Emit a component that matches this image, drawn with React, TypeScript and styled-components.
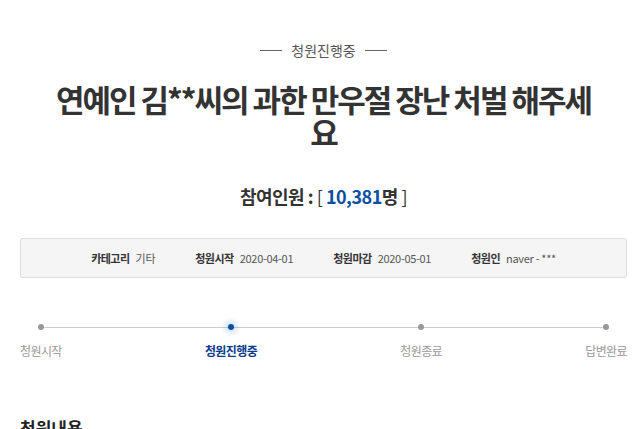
import styled, { createGlobalStyle } from "styled-components";

const GlobalStyle = createGlobalStyle`
    body {
        margin: 0;
        background: #fff;
        font-family: "Noto Sans CJK KR", "Noto Sans", sans-serif;
        color: #333;
    }
`

const infoItems = [
    { label: "카테고리", value: "기타" },
    { label: "청원시작", value: "2020-04-01" },
    { label: "청원마감", value: "2020-05-01" },
    { label: "청원인", value: "naver - ***" },
];

const steps = [
    { name: "청원시작", active: false },
    { name: "청원진행중", active: true },
    { name: "청원종료", active: false },
    { name: "답변완료", active: false },
];

export default function App(){
    return <>
        <GlobalStyle/>
        <Page>
            <Status>청원진행중</Status>
            <Title>연예인 김**씨의 과한 만우절 장난 처벌 해주세요</Title>
            <Count>
                참여인원 : <Bracket>[</Bracket> <Number>10,381</Number>명 <Bracket>]</Bracket>
            </Count>
            <InfoBox>
                {
                    infoItems.map((item, key) => <InfoItem key={key}>
                        <InfoLabel>{item.label}</InfoLabel>
                        <InfoValue>{item.value}</InfoValue>
                    </InfoItem>)
                }
            </InfoBox>
            <Steps>
                {
                    steps.map((step, key) => <Step key={key}>
                        <Dot active={step.active}/>
                        <StepName active={step.active}>{step.name}</StepName>
                    </Step>)
                }
            </Steps>
            <SectionTitle>청원내용</SectionTitle>
        </Page>
    </>
}

const Page = styled.div`
    padding: 40px 13px 0 20px;
    height: 429px;
    box-sizing: border-box;
    overflow: hidden;
`
const Status = styled.div`
    display: flex;
    justify-content: center;
    align-items: center;
    font-size: 14px;
    line-height: 20px;
    color: #555;
    &::before, &::after {
        content: "";
        width: 22px;
        height: 1px;
        background: #666;
        margin: 0 9px;
    }
`
const Title = styled.h1`
    margin: 22px auto 0;
    width: 550px;
    text-align: center;
    font-size: 31px;
    line-height: 33px;
    font-weight: bold;
    letter-spacing: -2px;
    color: #333;
`
const Count = styled.div`
    margin-top: 36px;
    text-align: center;
    font-size: 18px;
    line-height: 24px;
    font-weight: bold;
    letter-spacing: -0.5px;
    color: #333;
`
const Bracket = styled.span`
    font-weight: normal;
`
const Number = styled.span`
    color: #0b4ea2;
`
const InfoBox = styled.div`
    margin-top: 30px;
    height: 40px;
    box-sizing: border-box;
    display: flex;
    justify-content: center;
    align-items: center;
    gap: 40px;
    background: #f5f5f5;
    border: 1px solid #dcdcdc;
    border-radius: 3px;
    font-size: 11px;
`
const InfoItem = styled.div`
    display: flex;
    gap: 6px;
`
const InfoLabel = styled.span`
    font-weight: bold;
    color: #333;
    letter-spacing: -0.5px;
`
const InfoValue = styled.span`
    color: #555;
    letter-spacing: -0.3px;
`
const Steps = styled.div`
    position: relative;
    margin-top: 46px;
    display: flex;
    justify-content: space-between;
    &::before {
        content: "";
        position: absolute;
        top: 3px;
        left: 20px;
        right: 20px;
        height: 1px;
        background: #ccc;
    }
`
const Step = styled.div`
    position: relative;
    display: flex;
    flex-direction: column;
    align-items: center;
    gap: 13px;
`
const Dot = styled.div<{active: boolean}>`
    width: 6px;
    height: 6px;
    border-radius: 50%;
    background: ${props => props.active ? "#0b4ea2" : "#999"};
    box-shadow: ${props => props.active ? "0 0 4px 4px rgba(60, 130, 230, 0.18)" : "none"};
`
const StepName = styled.div<{active: boolean}>`
    font-size: 12px;
    line-height: 16px;
    color: ${props => props.active ? "#0b3b8a" : "#999"};
    font-weight: ${props => props.active ? "bold" : "normal"};
    letter-spacing: -0.6px;
`
const SectionTitle = styled.h2`
    margin: 57px 0 0;
    font-size: 17px;
    line-height: 24px;
    font-weight: bold;
    color: #222;
`
